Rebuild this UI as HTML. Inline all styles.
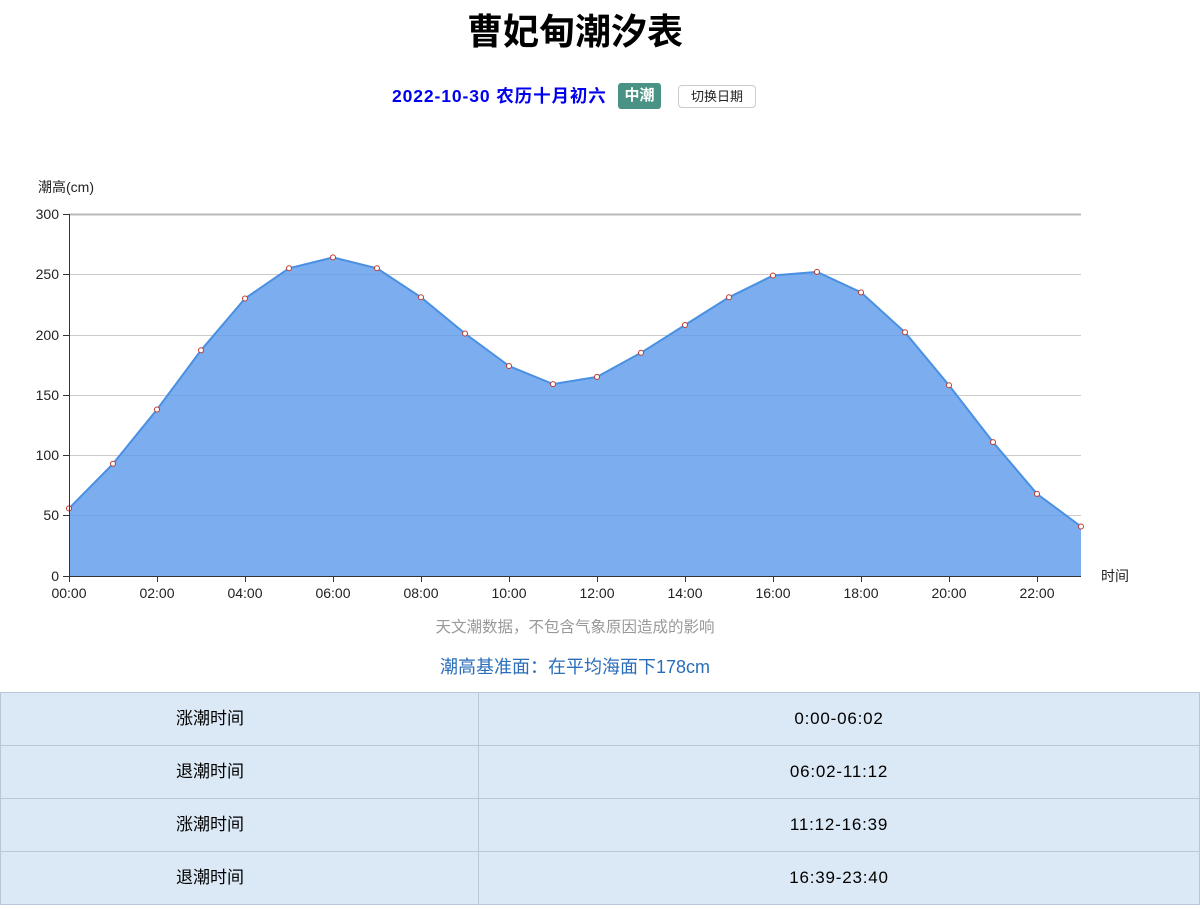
<!DOCTYPE html>
<html><head><meta charset="utf-8"><style>
body{margin:0;width:1200px;height:909px;background:#fff;font-family:"Liberation Sans","Noto Sans CJK SC",sans-serif;position:relative;overflow:hidden}
h1{position:absolute;top:8px;left:0;width:1150px;text-align:center;margin:0;font-size:36px;font-weight:bold;color:#000;line-height:48px}
.sub{position:absolute;top:84px;left:392px;font-size:17.5px;font-weight:bold;color:#0000ee;line-height:24px;white-space:nowrap;letter-spacing:0.9px}
.tag{position:absolute;top:83px;left:618px;width:43px;height:26px;background:#4a9384;color:#fff;font-size:15px;font-weight:bold;border-radius:3px;text-align:center;line-height:26px}
.btn{position:absolute;top:85px;left:678px;width:76px;height:21px;border:1px solid #ccc;border-radius:4px;font-size:13px;text-align:center;line-height:21px;color:#222}
table{position:absolute;top:692px;left:0;width:1200px;border-collapse:collapse;background:#dbe8f5}
td{border:1px solid #b8c8d8;height:52px;line-height:52px;font-size:17px;color:#000;padding:0;vertical-align:middle;white-space:nowrap}
td.l{width:477px;text-align:left;padding-left:0}
td.l span{display:inline-block;margin-left:175px}
td.r{text-align:center;letter-spacing:0.8px}
</style></head><body>
<h1>曹妃甸潮汐表</h1>
<div class="sub">2022-10-30 农历十月初六</div>
<div class="tag">中潮</div>
<div class="btn">切换日期</div>
<svg width="1200" height="690" style="position:absolute;top:0;left:0" font-family="Liberation Sans, Noto Sans CJK SC, sans-serif">
<text x="38" y="192" font-size="14" fill="#222">潮高(cm)</text>
<g stroke="#ccc" stroke-width="1">
<line x1="69" y1="214.5" x2="1081" y2="214.5" stroke="#bbb" stroke-width="2"/>
<line x1="69" y1="274.5" x2="1081" y2="274.5"/>
<line x1="69" y1="335.5" x2="1081" y2="335.5"/>
<line x1="69" y1="395.5" x2="1081" y2="395.5"/>
<line x1="69" y1="455.5" x2="1081" y2="455.5"/>
<line x1="69" y1="515.5" x2="1081" y2="515.5"/>
</g>
<polygon fill="#5f9ceb" fill-opacity="0.82" points="69,576 69,508.4 113,463.8 157,409.5 201,350.3 245,298.5 289,268.3 333,257.4 377,268.3 421,297.3 465,333.5 509,366 553,384.1 597,376.9 641,352.8 685,325 729,297.3 773,275.5 817,271.9 861,292.4 905,332.3 949,385.3 993,442.1 1037,493.9 1081,526.5 1081,576"/>
<polyline fill="none" stroke="#4a90e2" stroke-width="2" points="69,508.4 113,463.8 157,409.5 201,350.3 245,298.5 289,268.3 333,257.4 377,268.3 421,297.3 465,333.5 509,366 553,384.1 597,376.9 641,352.8 685,325 729,297.3 773,275.5 817,271.9 861,292.4 905,332.3 949,385.3 993,442.1 1037,493.9 1081,526.5"/>
<g fill="#fff" stroke="#c0392b" stroke-width="1">
<circle cx="69" cy="508.4" r="2.5"/><circle cx="113" cy="463.8" r="2.5"/><circle cx="157" cy="409.5" r="2.5"/><circle cx="201" cy="350.3" r="2.5"/><circle cx="245" cy="298.5" r="2.5"/><circle cx="289" cy="268.3" r="2.5"/><circle cx="333" cy="257.4" r="2.5"/><circle cx="377" cy="268.3" r="2.5"/><circle cx="421" cy="297.3" r="2.5"/><circle cx="465" cy="333.5" r="2.5"/><circle cx="509" cy="366" r="2.5"/><circle cx="553" cy="384.1" r="2.5"/><circle cx="597" cy="376.9" r="2.5"/><circle cx="641" cy="352.8" r="2.5"/><circle cx="685" cy="325" r="2.5"/><circle cx="729" cy="297.3" r="2.5"/><circle cx="773" cy="275.5" r="2.5"/><circle cx="817" cy="271.9" r="2.5"/><circle cx="861" cy="292.4" r="2.5"/><circle cx="905" cy="332.3" r="2.5"/><circle cx="949" cy="385.3" r="2.5"/><circle cx="993" cy="442.1" r="2.5"/><circle cx="1037" cy="493.9" r="2.5"/><circle cx="1081" cy="526.5" r="2.5"/>
</g>
<g stroke="#333" stroke-width="1">
<line x1="69.5" y1="214" x2="69.5" y2="576"/>
<line x1="69" y1="576.5" x2="1081" y2="576.5"/>
<line x1="63" y1="214.5" x2="69" y2="214.5"/><line x1="63" y1="274.5" x2="69" y2="274.5"/><line x1="63" y1="335.5" x2="69" y2="335.5"/><line x1="63" y1="395.5" x2="69" y2="395.5"/><line x1="63" y1="455.5" x2="69" y2="455.5"/><line x1="63" y1="515.5" x2="69" y2="515.5"/><line x1="63" y1="576.5" x2="69" y2="576.5"/>
<line x1="157.5" y1="576" x2="157.5" y2="582"/><line x1="245.5" y1="576" x2="245.5" y2="582"/><line x1="333.5" y1="576" x2="333.5" y2="582"/><line x1="421.5" y1="576" x2="421.5" y2="582"/><line x1="509.5" y1="576" x2="509.5" y2="582"/><line x1="597.5" y1="576" x2="597.5" y2="582"/><line x1="685.5" y1="576" x2="685.5" y2="582"/><line x1="773.5" y1="576" x2="773.5" y2="582"/><line x1="861.5" y1="576" x2="861.5" y2="582"/><line x1="949.5" y1="576" x2="949.5" y2="582"/><line x1="1037.5" y1="576" x2="1037.5" y2="582"/><line x1="69.5" y1="576" x2="69.5" y2="582"/>
</g>
<g font-size="14" fill="#222" text-anchor="end">
<text x="59" y="219">300</text><text x="59" y="279">250</text><text x="59" y="340">200</text><text x="59" y="400">150</text><text x="59" y="460">100</text><text x="59" y="520">50</text><text x="59" y="581">0</text>
</g>
<g font-size="14" fill="#222" text-anchor="middle">
<text x="69" y="598">00:00</text><text x="157" y="598">02:00</text><text x="245" y="598">04:00</text><text x="333" y="598">06:00</text><text x="421" y="598">08:00</text><text x="509" y="598">10:00</text><text x="597" y="598">12:00</text><text x="685" y="598">14:00</text><text x="773" y="598">16:00</text><text x="861" y="598">18:00</text><text x="949" y="598">20:00</text><text x="1037" y="598">22:00</text>
</g>
<text x="1101" y="581" font-size="14" fill="#222">时间</text>
<text x="575" y="632" font-size="15.5" fill="#999" text-anchor="middle">天文潮数据，不包含气象原因造成的影响</text>
<text x="575" y="673" font-size="18" fill="#2a6ebb" text-anchor="middle">潮高基准面：在平均海面下178cm</text>
</svg>
<table>
<tr><td class="l"><span>涨潮时间</span></td><td class="r">0:00-06:02</td></tr>
<tr><td class="l"><span>退潮时间</span></td><td class="r">06:02-11:12</td></tr>
<tr><td class="l"><span>涨潮时间</span></td><td class="r">11:12-16:39</td></tr>
<tr><td class="l"><span>退潮时间</span></td><td class="r">16:39-23:40</td></tr>
</table>
</body></html>
